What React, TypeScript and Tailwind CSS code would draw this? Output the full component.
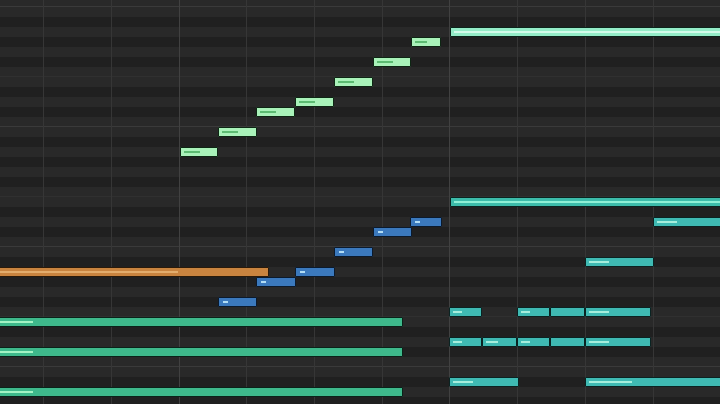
import React from "react";

type Kind = "g" | "m" | "tl" | "t" | "l" | "o" | "b";
type Note = { x1: number; x2: number; y: number; k: Kind; h?: [number, number] };

const fill: Record<Kind, string> = {
  g: "bg-[#a9f2b9] border-[#0d2613]",
  m: "bg-[#94ecc8] border-[#0b241a]",
  tl: "bg-[#3cbcaa] border-[#0a2420]",
  t: "bg-[#3fbab3] border-[#0a2322]",
  l: "bg-[#3eb98b] border-[#0a2219]",
  o: "bg-[#c9843f] border-[#2a1a0a]",
  b: "bg-[#3b79bd] border-[#0b1a2d]",
};
const hl: Record<Kind, string> = {
  g: "bg-[#5cbc72]",
  m: "bg-[#d3fcea]",
  tl: "bg-[#8ff0d6]",
  t: "bg-[#a6eedd]",
  l: "bg-[#a3f3c4]",
  o: "bg-[#e3ad6d]",
  b: "bg-[#b2ddf5]",
};

const notes: Note[] = [
  { x1: 180, x2: 218, y: 147, k: "g", h: [184, 200] },
  { x1: 218, x2: 257, y: 127, k: "g", h: [222, 238] },
  { x1: 256, x2: 295, y: 107, k: "g", h: [260, 276] },
  { x1: 295, x2: 334, y: 97, k: "g", h: [299, 315] },
  { x1: 334, x2: 373, y: 77, k: "g", h: [338, 354] },
  { x1: 373, x2: 411, y: 57, k: "g", h: [377, 393] },
  { x1: 411, x2: 441, y: 37, k: "g", h: [415, 427] },
  { x1: 450, x2: 722, y: 27, k: "m", h: [454, 722] },
  { x1: 450, x2: 722, y: 197, k: "tl", h: [454, 722] },
  { x1: 653, x2: 722, y: 217, k: "t", h: [657, 677] },
  { x1: 585, x2: 654, y: 257, k: "t", h: [589, 609] },
  { x1: 449, x2: 482, y: 307, k: "t", h: [453, 462] },
  { x1: 517, x2: 550, y: 307, k: "t", h: [521, 530] },
  { x1: 550, x2: 585, y: 307, k: "t" },
  { x1: 585, x2: 651, y: 307, k: "t", h: [589, 609] },
  { x1: 449, x2: 482, y: 337, k: "t", h: [453, 462] },
  { x1: 482, x2: 517, y: 337, k: "t", h: [486, 498] },
  { x1: 517, x2: 550, y: 337, k: "t", h: [521, 530] },
  { x1: 550, x2: 585, y: 337, k: "t" },
  { x1: 585, x2: 651, y: 337, k: "t", h: [589, 609] },
  { x1: 449, x2: 519, y: 377, k: "t", h: [453, 473] },
  { x1: 585, x2: 722, y: 377, k: "t", h: [589, 632] },
  { x1: -2, x2: 403, y: 317, k: "l", h: [0, 33] },
  { x1: -2, x2: 403, y: 347, k: "l", h: [0, 33] },
  { x1: -2, x2: 403, y: 387, k: "l", h: [0, 33] },
  { x1: -2, x2: 269, y: 267, k: "o", h: [0, 178] },
  { x1: 218, x2: 257, y: 297, k: "b", h: [223, 228] },
  { x1: 256, x2: 296, y: 277, k: "b", h: [261, 266] },
  { x1: 295, x2: 335, y: 267, k: "b", h: [300, 305] },
  { x1: 334, x2: 373, y: 247, k: "b", h: [339, 344] },
  { x1: 373, x2: 412, y: 227, k: "b", h: [378, 383] },
  { x1: 410, x2: 442, y: 217, k: "b", h: [415, 420] },
];

const BLACK = new Set([2, 4, 6, 9, 11]);
const rows = Array.from({ length: 42 }, (_, i) => i);
const vlines = [43, 111, 179, 246, 314, 382, 449, 517, 585, 653];

export default function App() {
  return (
    <div className="relative w-[720px] h-[404px] overflow-hidden bg-[#262626]">
      <div className="flex flex-col -mt-[3px]">
        {rows.map((i) => {
          const m = i % 12;
          const black = BLACK.has(m);
          const isC = m === 0;
          const isF = m === 7;
          return (
            <div
              key={i}
              className={
                "h-[10px] shrink-0 " +
                (black ? "bg-[#202020] " : "bg-[#292929] ") +
                (isC ? "border-b border-[#3a3a3a]" : isF ? "border-b border-[#303030]" : "")
              }
            />
          );
        })}
      </div>
      {vlines.map((x) => (
        <div
          key={x}
          className={"absolute top-0 bottom-0 w-px " + (x === 179 || x === 449 ? "bg-[#414141]" : "bg-[#363636]")}
          style={{ left: x }}
        />
      ))}
      {notes.map((n, idx) => (
        <div
          key={idx}
          className={"absolute h-[10px] border rounded-[1px] " + fill[n.k]}
          style={{ left: n.x1, top: n.y, width: n.x2 - n.x1 }}
        >
          {n.h && (
            <div
              className={"absolute top-[3px] h-[2px] " + hl[n.k]}
              style={{ left: Math.max(n.h[0] - n.x1 - 1, 1), width: n.h[1] - Math.max(n.h[0], n.x1 + 2) }}
            />
          )}
        </div>
      ))}
    </div>
  );
}
